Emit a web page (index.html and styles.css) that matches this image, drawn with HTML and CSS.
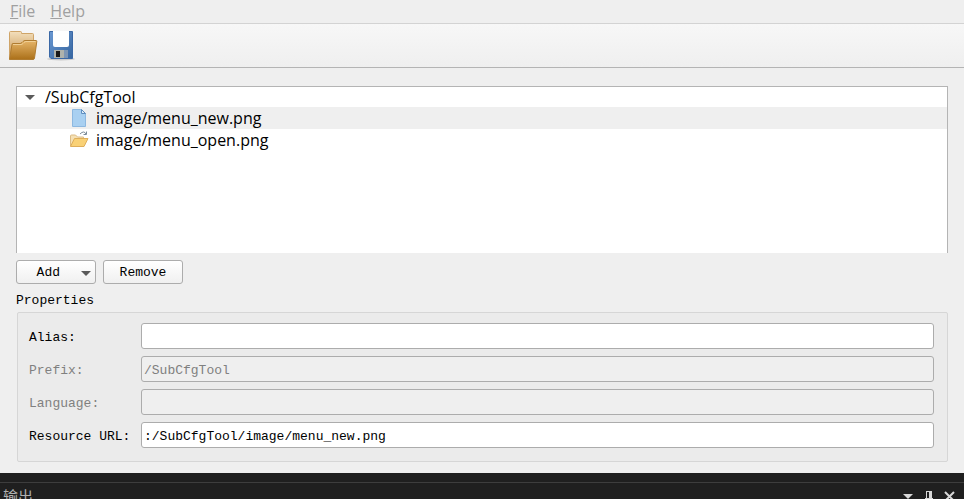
FILE: index.html
```
<!DOCTYPE html>
<html lang="en">
<head>
    <meta charset="UTF-8">
    <meta name="viewport" content="width=device-width, initial-scale=1.0">
    <title>Resource Editor</title>
    <link rel="stylesheet" href="styles.css">
</head>
<body>
    <nav class="menubar">
        <a href="#"><u>F</u>ile</a>
        <a href="#"><u>H</u>elp</a>
    </nav>

    <div class="toolbar">
        <button type="button" class="tool" aria-label="Open">
            <svg width="32" height="32" viewBox="0 0 32 32">
                <defs>
                    <linearGradient id="back" x1="0" y1="0" x2="0" y2="1">
                        <stop offset="0" stop-color="#f3dfbc"/>
                        <stop offset="1" stop-color="#c4904a"/>
                    </linearGradient>
                    <linearGradient id="front" x1="0" y1="0" x2="0" y2="1">
                        <stop offset="0" stop-color="#e6b569"/>
                        <stop offset="1" stop-color="#ab7019"/>
                    </linearGradient>
                </defs>
                <path d="M3.500 30V3.500q0-1 1-1h10q1 0 1 1v1h11q1 0 1 1V15L6 30z" fill="url(#back)" stroke="#cfa468"/>
                <path d="M3.500 30.500L6 15.500q0-1 1-1h7q1 0 2-1l1-1q1-1 2-1h11q1 0 .8 1L28.500 29q-.2 1.500-1.500 1.500z" fill="url(#front)" stroke="#b07c30"/>
                <path d="M7 15.500h8q1 0 2-1l1-1q1-1 2-1h9.500" fill="none" stroke="#f0cf94"/>
            </svg>
        </button>
        <button type="button" class="tool" aria-label="Save">
            <svg width="32" height="32" viewBox="0 0 32 32">
                <defs>
                    <linearGradient id="disk" x1="0" y1="0" x2="1" y2="1">
                        <stop offset="0" stop-color="#6a98d2"/>
                        <stop offset="1" stop-color="#35659f"/>
                    </linearGradient>
                </defs>
                <ellipse cx="17" cy="30" rx="14" ry="1.500" fill="#cacaca"/>
                <path d="M5.500 2.500h23v27H7l-1.500-1.500z" fill="url(#disk)" stroke="#3a68a6"/>
                <path d="M9 2h16v14q0 2-2 2H11q-2 0-2-2z" fill="#fff"/>
                <path d="M10 21h14v8H10z" fill="#aeb2ac"/>
                <path d="M20 21h4v8h-4z" fill="#7c95b4"/>
                <path d="M12 22h4v6h-4z" fill="#181818"/>
            </svg>
        </button>
    </div>

    <main>
        <ul class="tree">
            <li class="root"><span class="arrow"></span>/SubCfgTool</li>
            <li class="item selected">
                <svg width="20" height="20" viewBox="0 0 20 20">
                    <path d="M3.500 1.500h9l4 4v13h-13z" fill="#a9d0f1" stroke="#8db8e0"/>
                    <path d="M12.500 1.500v4h4z" fill="#dcebf8" stroke="#5f8fc0"/>
                </svg>
                image/menu_new.png
            </li>
            <li class="item">
                <svg width="20" height="20" viewBox="0 0 20 20">
                    <path d="M1.500 16V6q0-1 1-1h4l2 2h6v3" fill="#f5e0b4" stroke="#dcbb84"/>
                    <path d="M1.500 16.500l4-8h13.500l-4 8z" fill="#f9d176" stroke="#dfae5a"/>
                    <path d="M11 4q4-4 6 0M17.500 1.500V4.500h-3" fill="none" stroke="#7a8a98"/>
                </svg>
                image/menu_open.png
            </li>
        </ul>

        <div class="buttons">
            <button type="button" class="btn add">Add<span class="arrow"></span></button>
            <button type="button" class="btn">Remove</button>
        </div>

        <form>
            <h2>Properties</h2>
            <div class="group">
                <label for="alias">Alias:</label>
                <input type="text" id="alias" name="alias">

                <label for="prefix" class="off">Prefix:</label>
                <input type="text" id="prefix" name="prefix" value="/SubCfgTool" disabled>

                <label for="language" class="off">Language:</label>
                <input type="text" id="language" name="language" disabled>

                <label for="url">Resource URL:</label>
                <input type="text" id="url" name="url" value=":/SubCfgTool/image/menu_new.png" readonly>
            </div>
        </form>
    </main>

    <footer class="output">
        <div class="output-title">
            <span lang="zh">输出</span>
            <button type="button" aria-label="Window position">
                <svg width="13" height="13" viewBox="0 0 13 13"><path d="M2 4h10L7 9z" fill="#d8d8d8"/></svg>
            </button>
            <button type="button" aria-label="Auto hide">
                <svg width="13" height="13" viewBox="0 0 13 13"><path d="M4 1h6v7h1v1H7v4H6V9H3V8h1zM5 2v6h2V2z" fill="#d8d8d8" fill-rule="evenodd"/></svg>
            </button>
            <button type="button" aria-label="Close">
                <svg width="13" height="13" viewBox="0 0 13 13"><path d="M2 2l9 9M11 2l-9 9" fill="none" stroke="#d8d8d8" stroke-width="2"/></svg>
            </button>
        </div>
    </footer>
</body>
</html>
```

FILE: styles.css
```
* {
    box-sizing: border-box;
}
body {
    margin: 0;
    height: 100vh;
    display: flex;
    flex-direction: column;
    overflow: hidden;
    background-color: #efefef;
    color: #000;
    font-family: "Liberation Mono", monospace;
    font-size: 13px;
    line-height: 16px;
}
button {
    font: inherit;
    color: inherit;
}
.menubar {
    display: flex;
    gap: 15px;
    padding: 0 10px;
    border-bottom: 1px solid #d3d3d3;
    font-family: "Open Sans", sans-serif;
    font-size: 16px;
    line-height: 23px;
}
.menubar a {
    color: #a0a0a0;
    text-decoration: none;
}
.toolbar {
    display: flex;
    gap: 6px;
    padding: 5px 6px 6px;
    border-bottom: 1px solid #b4b4b4;
    background: linear-gradient(#f7f7f7, #efefef);
}
.tool {
    padding: 0;
    border: none;
    background: none;
}
.tool svg {
    display: block;
}
main {
    flex-shrink: 0;
    padding: 18px 16px 11px;
}
.tree {
    list-style: none;
    margin: 0;
    padding: 0;
    min-height: 167px;
    border: 1px solid #b4b4b4;
    border-bottom: none;
    background-color: #fff;
    font-family: "Open Sans", sans-serif;
    font-size: 16px;
    line-height: 22px;
}
.tree li {
    display: flex;
    align-items: center;
}
.root {
    gap: 10px;
    padding-left: 8px;
    line-height: 20px;
}
.item {
    gap: 7px;
    padding-left: 52px;
}
.selected {
    background-color: #efefef;
}
.arrow {
    border: 5px solid transparent;
    border-top-color: #5a5a5a;
    border-bottom: none;
}
.buttons {
    display: flex;
    gap: 7px;
    margin-top: 7px;
}
.btn {
    width: 80px;
    height: 24px;
    padding: 2px 0 0;
    border: 1px solid #acacac;
    border-radius: 3px;
    background: linear-gradient(#fff, #f0f0f0);
}
.add {
    display: flex;
    align-items: center;
    justify-content: flex-end;
    gap: 21px;
    padding-right: 4px;
}
h2 {
    margin: 9px 0 3px;
    font-size: 13px;
    font-weight: normal;
}
.group {
    display: grid;
    grid-template-columns: 105px 1fr;
    align-items: center;
    gap: 7px;
    margin-left: 1px;
    padding: 10px 13px 13px 11px;
    border: 1px solid #d6d6d6;
    border-radius: 2px;
    background-color: #ebebeb;
}
label {
    padding-top: 3px;
    white-space: nowrap;
}
.off {
    color: #808080;
}
input {
    width: 100%;
    height: 26px;
    padding: 2px 2px 0;
    border: 1px solid #acacac;
    border-radius: 3px;
    background-color: #fff;
    color: #000;
    font: inherit;
}
input:disabled {
    background-color: #efefef;
    color: #808080;
}
.output {
    flex: 1;
    min-height: 0;
    padding-top: 9px;
    overflow: hidden;
    background-color: #1f1f1f;
    color: #b0b0b0;
}
.output-title {
    display: flex;
    align-items: center;
    gap: 8px;
    height: 27px;
    padding: 0 8px 0 3px;
    border-top: 1px solid #3d3d3d;
    font-family: "Noto Sans CJK SC", sans-serif;
    font-size: 15px;
}
.output-title span {
    flex: 1;
}
.output-title button {
    display: flex;
    padding: 0;
    border: none;
    background: none;
}
```
